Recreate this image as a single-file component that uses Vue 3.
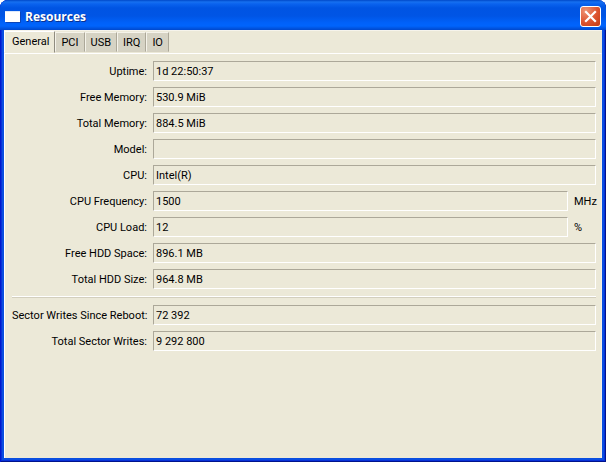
<template>
  <div class="window">
    <header class="title-bar">
      <svg class="app-icon" width="16" height="14" viewBox="0 0 16 14" aria-hidden="true">
        <rect x="0" y="1" width="15" height="11" fill="#fff" />
        <path d="M0 1h15v1H0z" fill="#dce8fa" />
        <path d="M15.500 2v10.500H1" fill="none" stroke="#0b45b8" />
      </svg>
      <h1>Resources</h1>
      <button class="close" type="button" aria-label="Close">
        <svg width="19" height="19" viewBox="0 0 19 19">
          <path d="M5 5l9 9M14 5l-9 9" stroke="#fff" stroke-width="2.2" stroke-linecap="square" />
        </svg>
      </button>
    </header>

    <main class="content">
      <div class="tabs" role="tablist">
        <button
          v-for="tab in tabs"
          :key="tab"
          class="tab"
          :class="{ active: tab === activeTab }"
          type="button"
          role="tab"
          :aria-selected="tab === activeTab"
          @click="activeTab = tab"
        >{{ tab }}</button>
      </div>

      <div class="panel" role="tabpanel">
        <template v-if="activeTab === 'General'">
          <div class="group" v-for="(group, g) in groups" :key="g">
            <div class="row" v-for="item in group" :key="item.id">
              <label :for="item.id">{{ item.label }}:</label>
              <input :id="item.id" type="text" :value="item.value" readonly />
              <span v-if="item.unit" class="unit">{{ item.unit }}</span>
            </div>
          </div>
        </template>
      </div>
    </main>
  </div>
</template>

<script setup>
import { ref } from 'vue';

const tabs = ['General', 'PCI', 'USB', 'IRQ', 'IO'];
const activeTab = ref('General');

const groups = ref([
  [
    { id: 'uptime', label: 'Uptime', value: '1d 22:50:37' },
    { id: 'free-memory', label: 'Free Memory', value: '530.9 MiB' },
    { id: 'total-memory', label: 'Total Memory', value: '884.5 MiB' },
    { id: 'model', label: 'Model', value: '' },
    { id: 'cpu', label: 'CPU', value: 'Intel(R)' },
    { id: 'cpu-frequency', label: 'CPU Frequency', value: '1500', unit: 'MHz' },
    { id: 'cpu-load', label: 'CPU Load', value: '12', unit: '%' },
    { id: 'free-hdd', label: 'Free HDD Space', value: '896.1 MB' },
    { id: 'total-hdd', label: 'Total HDD Size', value: '964.8 MB' },
  ],
  [
    { id: 'writes-reboot', label: 'Sector Writes Since Reboot', value: '72 392' },
    { id: 'writes-total', label: 'Total Sector Writes', value: '9 292 800' },
  ],
]);
</script>

<style>
body {
  margin: 0;
  background: #fff;
}
</style>

<style scoped>
  .window {
    box-sizing: border-box;
    display: flex;
    flex-direction: column;
    min-height: 100vh;
    padding: 0 4px 4px 4px;
    border-radius: 8px 8px 0 0;
    background: #0a4ee0;
    box-shadow: inset 1px 0 #0019cf, inset -1px -1px #00138c, inset 2px 0 #0831d9, inset -2px -2px #0831d9;
    font-family: Roboto, "Liberation Sans", sans-serif;
    font-size: 11px;
    color: #000;
    overflow: hidden;
  }
  .title-bar {
    display: flex;
    align-items: center;
    height: 30px;
    margin: 0 -4px;
    padding: 3px 5px 0 5px;
    box-sizing: border-box;
    background: linear-gradient(#0048c8 0, #1670f0 2px, #0a62ee 4px, #0054e3 8px, #0055e5 16px, #0062fa 23px, #0064fc 26px, #0048cc 30px);
  }
  .app-icon {
    margin-right: 4px;
  }
  h1 {
    flex: 1;
    margin: 0;
    font-family: "Open Sans", sans-serif;
    font-size: 12px;
    font-weight: 700;
    line-height: 20px;
    color: #fff;
    text-shadow: 1px 1px #0a318f;
  }
  .close {
    display: flex;
    padding: 0;
    border: 1px solid #fff;
    border-radius: 3px;
    background: radial-gradient(circle at 25% 20%, #ee9375, #dd5430 55%, #c23a12);
  }

  .content {
    flex: 1;
    display: flex;
    flex-direction: column;
    background: #ece9d8;
  }
  .tabs {
    display: flex;
    align-items: flex-end;
    height: 23px;
    border-top: 1px solid #f6f4ec;
    box-sizing: border-box;
  }
  .tab {
    height: 20px;
    padding: 2px 5px 0 5px;
    border: 1px solid;
    border-color: #f5f3ea #aca899 #d6d2c2 #f5f3ea;
    background: #d6d3c4;
    font: inherit;
    line-height: 16px;
    color: #000;
  }
  .tab.active {
    height: 22px;
    padding: 0 5px 0 7px;
    border-color: #fff #8f8c80 #ece9d8 #fff;
    background: #ece9d8;
  }
  .tab:not(.active) {
    margin-bottom: 1px;
  }
  .panel {
    flex: 1;
    padding: 7px 5px 0 7px;
    border-top: 1px solid #fff;
    border-left: 1px solid #fff;
    border-right: 1px solid #f6eee4;
  }

  .group + .group {
    margin-top: 7px;
    padding-top: 8px;
    border-top: 1px solid #fff;
    box-shadow: inset 0 1px #d3cfbe;
  }
  .row {
    display: flex;
    align-items: center;
    gap: 6px;
  }
  .row + .row {
    margin-top: 6px;
  }
  label {
    width: 135px;
    text-align: right;
    white-space: nowrap;
  }
  input {
    flex: 1;
    min-width: 0;
    box-sizing: border-box;
    height: 20px;
    padding: 0 2px;
    border: 1px solid;
    border-color: #aca899 #fff #fff #aca899;
    background: #ece9d8;
    font: inherit;
    color: #000;
    outline: none;
  }
  .unit {
    width: 22px;
  }
</style>
